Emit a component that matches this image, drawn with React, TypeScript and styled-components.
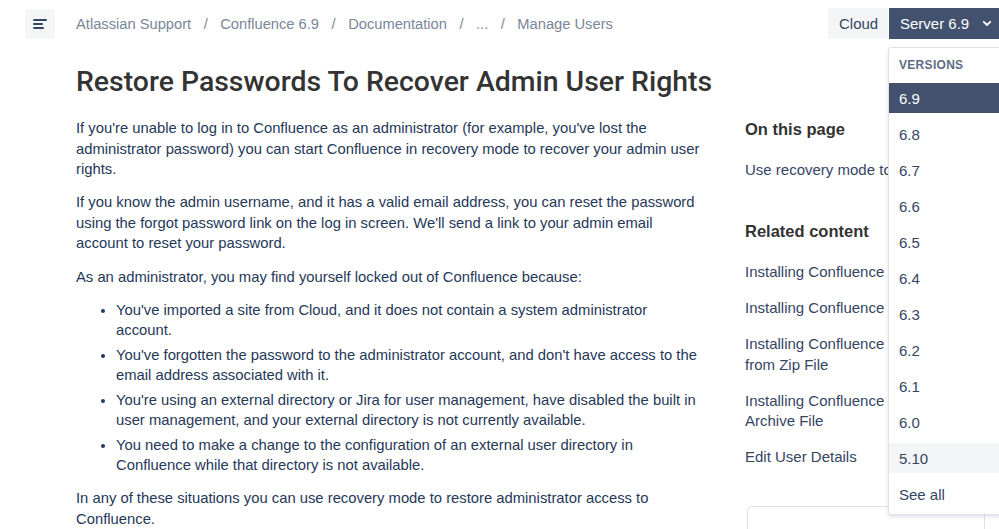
import React from "react";
import styled, { createGlobalStyle } from "styled-components";

const Global = createGlobalStyle`
  html, body { margin: 0; padding: 0; background: #fff; }
  body {
    font-family: "Liberation Sans", Arial, Helvetica, sans-serif;
    overflow: hidden;
    width: 999px;
    height: 529px;
  }
  * { box-sizing: border-box; }
`;

const Page = styled.div`
  position: relative;
  width: 999px;
  height: 529px;
  overflow: hidden;
`;

const TopBar = styled.header`
  display: flex;
  align-items: center;
  height: 47px;
  padding: 8px 0 8px 25px;
`;

const MenuButton = styled.button`
  width: 30px;
  height: 30px;
  border: 0;
  border-radius: 3px;
  background: #f4f5f7;
  display: flex;
  flex-direction: column;
  align-items: flex-start;
  justify-content: center;
  gap: 2px;
  padding: 0 0 0 8px;
  margin-top: 1px;
`;

const MenuLine = styled.span<{ $w: number }>`
  display: block;
  height: 2px;
  width: ${(p) => p.$w}px;
  background: #344563;
  border-radius: 1px;
`;

const Crumbs = styled.nav`
  display: flex;
  align-items: center;
  margin-left: 21px;
  font-size: 14.7px;
  color: #7a869a;
  flex: 1;
  white-space: nowrap;
`;

const Sep = styled.span`
  margin: 0 12.5px;
`;

const Switch = styled.div`
  display: flex;
  height: 31px;
`;

const EnvButton = styled.button<{ $active?: boolean }>`
  border: 0;
  height: 31px;
  font-family: inherit;
  font-size: 15px;
  display: flex;
  align-items: center;
  justify-content: flex-start;
  white-space: nowrap;
  gap: 13px;
  padding: 0 0 0 11px;
  border-radius: ${(p) => (p.$active ? "0" : "3px 0 0 3px")};
  background: ${(p) => (p.$active ? "#42526e" : "#f4f5f7")};
  color: ${(p) => (p.$active ? "#ffffff" : "#344563")};
  width: ${(p) => (p.$active ? "110px" : "60px")};
  margin-right: ${(p) => (p.$active ? "0" : "1px")};
`;

const Main = styled.main`
  padding: 17px 0 0 76px;
`;

const Title = styled.h1`
  margin: 0 0 18px;
  font-family: Roboto, "Liberation Sans", Arial, sans-serif;
  font-size: 28.4px;
  line-height: 36px;
  font-weight: 500;
  color: #333333;
  white-space: nowrap;
`;

const Columns = styled.div`
  display: grid;
  grid-template-columns: 629px 240px;
  column-gap: 40px;
`;

const Article = styled.article`
  font-size: 14.8px;
  line-height: 20.5px;
  color: #253858;
`;

const Para = styled.p`
  margin: 0 0 12.8px;
`;

const List = styled.ul`
  margin: 0 0 12.5px;
  padding-left: 40px;
  display: flex;
  flex-direction: column;
  gap: 4px;
`;

const Item = styled.li``;

const Side = styled.aside`
  display: flex;
  flex-direction: column;
  margin-top: -1px;
  color: #344563;
`;

const SideHeading = styled.h3<{ $top?: number; $bottom?: number }>`
  margin: ${(p) => p.$top ?? 0}px 0 ${(p) => p.$bottom ?? 17.5}px;
  font-size: 16.5px;
  line-height: 24px;
  font-weight: 600;
  color: #333333;
`;

const SideLinks = styled.div`
  display: flex;
  flex-direction: column;
  gap: 15.6px;
`;

const SideLink = styled.a<{ $nowrap?: boolean }>`
  font-size: 15px;
  line-height: 20.5px;
  color: #344563;
  text-decoration: none;
  ${(p) => (p.$nowrap ? "white-space: nowrap; overflow: hidden;" : "")}
`;

const HelpBox = styled.div`
  margin-top: 38px;
  margin-left: 2px;
  border: 1px solid #dfe1e6;
  border-radius: 5px;
  padding: 21px 17px;
  height: 80px;
`;

const HelpTitle = styled.div`
  font-size: 16.5px;
  font-weight: 600;
  color: #333333;
`;

const Menu = styled.div`
  position: absolute;
  top: 47px;
  left: 888px;
  width: 140px;
  background: #fff;
  border: 1px solid #dfe1e6;
  border-radius: 3px;
  box-shadow: 0 2px 4px rgba(9, 30, 66, 0.12);
  padding: 5px 0 5px;
  display: flex;
  flex-direction: column;
  gap: 6px;
`;

const MenuHeader = styled.div`
  height: 24px;
  line-height: 25px;
  padding-left: 10px;
  font-size: 12px;
  font-weight: 700;
  letter-spacing: 0.3px;
  color: #5e6c84;
`;

const MenuItem = styled.div<{ $state?: "selected" | "hover" }>`
  height: 30px;
  line-height: 31px;
  padding-left: 10px;
  font-size: 15px;
  background: ${(p) =>
    p.$state === "selected" ? "#42526e" : p.$state === "hover" ? "#f4f5f7" : "transparent"};
  color: ${(p) => (p.$state === "selected" ? "#ffffff" : "#344563")};
`;

const Chevron = () => (
  <svg width="10" height="7" viewBox="0 0 10 7" fill="none">
    <path d="M1.8 1.8 L5 5 L8.2 1.8" stroke="#fff" strokeWidth="1.8" strokeLinecap="round" strokeLinejoin="round" />
  </svg>
);

const versions = ["6.9", "6.8", "6.7", "6.6", "6.5", "6.4", "6.3", "6.2", "6.1", "6.0", "5.10", "See all"];

export default function App() {
  return (
    <Page>
      <Global />
      <TopBar>
        <MenuButton aria-label="menu">
          <MenuLine $w={14} />
          <MenuLine $w={10} />
          <MenuLine $w={11} />
        </MenuButton>
        <Crumbs>
          <span>Atlassian Support</span>
          <Sep>/</Sep>
          <span>Confluence 6.9</span>
          <Sep>/</Sep>
          <span>Documentation</span>
          <Sep>/</Sep>
          <span>...</span>
          <Sep>/</Sep>
          <span>Manage Users</span>
        </Crumbs>
        <Switch>
          <EnvButton>Cloud</EnvButton>
          <EnvButton $active>
            Server 6.9 <Chevron />
          </EnvButton>
        </Switch>
      </TopBar>
      <Main>
        <Title>Restore Passwords To Recover Admin User Rights</Title>
        <Columns>
          <Article>
            <Para>
              If you're unable to log in to Confluence as an administrator (for example, you've lost the administrator
              password) you can start Confluence in recovery mode to recover your admin user rights.
            </Para>
            <Para>
              If you know the admin username, and it has a valid email address, you can reset the password using the
              forgot password link on the log in screen. We'll send a link to your admin email account to reset your
              password.
            </Para>
            <Para>As an administrator, you may find yourself locked out of Confluence because:</Para>
            <List>
              <Item>You've imported a site from Cloud, and it does not contain a system administrator account.</Item>
              <Item>
                You've forgotten the password to the administrator account, and don't have access to the email address
                associated with it.
              </Item>
              <Item>
                You're using an external directory or Jira for user management, have disabled the built in user
                management, and your external directory is not currently available.
              </Item>
              <Item>
                You need to make a change to the configuration of an external user directory in Confluence while that
                directory is not available.
              </Item>
            </List>
            <Para>
              In any of these situations you can use recovery mode to restore administrator access to Confluence.
            </Para>
          </Article>
          <Side>
            <SideHeading $bottom={18.5}>On this page</SideHeading>
            <SideLinks>
              <SideLink $nowrap>Use recovery mode to recover admin rights</SideLink>
            </SideLinks>
            <SideHeading $top={38.5} $bottom={19.5}>
              Related content
            </SideHeading>
            <SideLinks>
              <SideLink>Installing Confluence on Windows</SideLink>
              <SideLink>Installing Confluence on Linux</SideLink>
              <SideLink>Installing Confluence on Windows from Zip File</SideLink>
              <SideLink>Installing Confluence on Linux from Archive File</SideLink>
              <SideLink>Edit User Details</SideLink>
            </SideLinks>
            <HelpBox>
              <HelpTitle>Still need help?</HelpTitle>
            </HelpBox>
          </Side>
        </Columns>
      </Main>
      <Menu>
        <MenuHeader>VERSIONS</MenuHeader>
        {versions.map((v, i) => (
          <MenuItem key={v} $state={i === 0 ? "selected" : v === "5.10" ? "hover" : undefined}>
            {v}
          </MenuItem>
        ))}
      </Menu>
    </Page>
  );
}
